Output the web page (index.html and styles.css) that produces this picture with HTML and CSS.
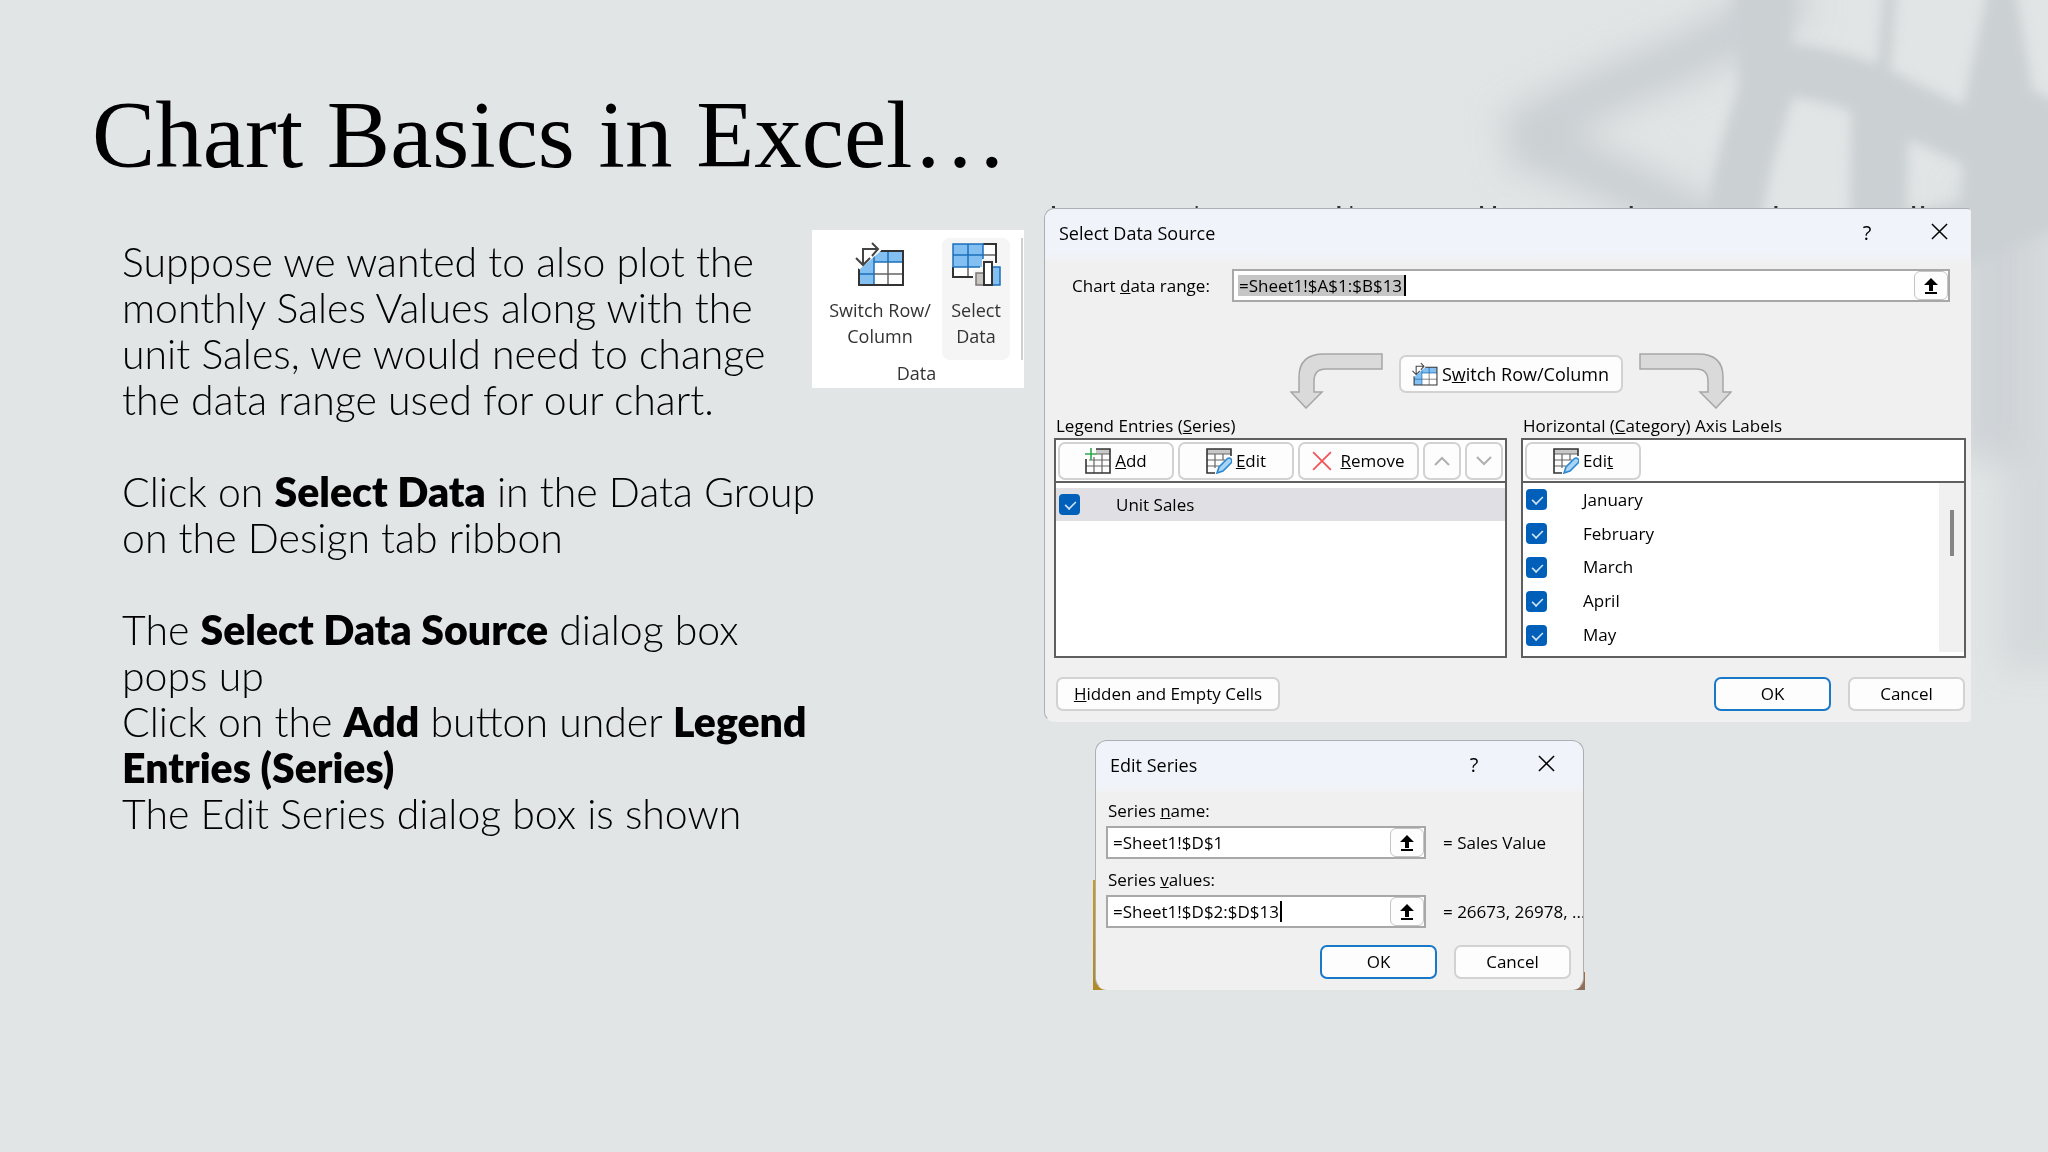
FILE: index.html
```
<!DOCTYPE html>
<html lang="en">
<head>
    <meta charset="UTF-8">
    <meta name="viewport" content="width=device-width, initial-scale=1.0">
    <title>Chart Basics in Excel</title>
    <link rel="stylesheet" href="styles.css">
</head>
<body>
    <!-- shared icons -->
    <svg class="sprite" aria-hidden="true">
        <symbol id="icon-switch" viewBox="0 0 50 46">
            <path d="M4 27L22 10h26v34H4z" fill="#fff"/>
            <path d="M22 10h26v11H19v23H4V27z" fill="#83bff0"/>
            <path d="M4 33h15M19 14v30M19 21h29M33 10v11" fill="none" stroke="#1b6fba" stroke-width="1.5"/>
            <path d="M33 21v23M19 33h29" fill="none" stroke="#666" stroke-width="1.5"/>
            <path d="M22 10h26v34H4V27" fill="none" stroke="#333" stroke-width="2"/>
            <path d="M3 27L25 8" stroke="#fff" stroke-width="4"/>
            <path d="M8 23V8h15M17 2l6 6-6 7M1 17l7 7 7-7" fill="none" stroke="#444" stroke-width="2"/>
        </symbol>
        <symbol id="icon-select" viewBox="0 0 50 46">
            <path d="M2 3h44v33H2z" fill="#fff"/>
            <path d="M2 3h30v23H2z" fill="#83bff0"/>
            <path d="M32 14h13M17 26v10" fill="none" stroke="#666" stroke-width="1.5"/>
            <path d="M32 3h13v19M2 26v10h21" fill="none" stroke="#333" stroke-width="2"/>
            <path d="M2 26V3h30v16M2 14h30M17 3v23M2 26h27" fill="none" stroke="#1b6fba" stroke-width="1.5"/>
            <path d="M22 29h9V18h12v5h8v23H22z" fill="#f5f5f5"/>
            <path d="M25 32h8v12h-8z" fill="#c8c4c0" stroke="#777" stroke-width="1.5"/>
            <path d="M41 26h8v18h-8z" fill="#83bff0" stroke="#1b6fba" stroke-width="1.5"/>
            <path d="M33 21h8v23h-8z" fill="#fff" stroke="#333" stroke-width="2"/>
        </symbol>
        <symbol id="icon-add" viewBox="0 0 26 26">
            <path d="M11 1h14v5H11z" fill="#c8c8c8"/>
            <path d="M9 9v16M17 6v19M4 12h21M1 18h24M12 6h13" fill="none" stroke="#666" stroke-width="1.2"/>
            <path d="M11 1h14v24H1V11" fill="none" stroke="#333" stroke-width="1.6"/>
            <path d="M6 0v12M0 6h12" fill="none" stroke="#2fa84f" stroke-width="1.6"/>
        </symbol>
        <symbol id="icon-edit" viewBox="0 0 26 26">
            <path d="M1 1h24v5H1z" fill="#c8c8c8"/>
            <path d="M9 6v14M17 6v6M1 12h18M1 18h12M1 6h24" fill="none" stroke="#666" stroke-width="1.2"/>
            <path d="M9 25H1V1h24v7" fill="none" stroke="#333" stroke-width="1.6"/>
            <path d="M11 25l2-6 8-8q2-2 4 0t0 4l-8 8z" fill="#a8d4f5" stroke="#2b88d0" stroke-width="1.6"/>
        </symbol>
        <symbol id="icon-close" viewBox="0 0 18 18">
            <path d="M1 1l16 16M17 1L1 17" fill="none" stroke="currentColor" stroke-width="1.6"/>
        </symbol>
        <symbol id="icon-pick" viewBox="0 0 14 16">
            <path d="M7 0l7 7H9v6H5V7H0zM1 14h12v2H1z" fill="currentColor"/>
        </symbol>
        <symbol id="icon-arrow" viewBox="0 0 93 56">
            <path d="M92 1v15H36q-12 0-12 12v11h8L16 55 1 39h8V24Q9 1 34 1z" fill="#dadada" stroke="#a6a6a6" stroke-width="1.5"/>
        </symbol>
    </svg>

    <!-- soft window shadow in the corner -->
    <svg class="shadow" viewBox="0 0 648 800" aria-hidden="true">
        <defs>
            <filter id="soft" x="-20%" y="-20%" width="140%" height="140%"><feGaussianBlur stdDeviation="16"/></filter>
            <filter id="mid" x="-20%" y="-20%" width="140%" height="140%"><feGaussianBlur stdDeviation="6"/></filter>
        </defs>
        <g fill="none" stroke="#cbd0d3" filter="url(#soft)">
            <path d="M400-10Q330 40 250 72T110 140" stroke-width="52"/>
            <path d="M110 140Q200 165 330 240" stroke-width="52"/>
            <path d="M590 190V460" stroke-width="60" opacity=".8"/>
            <path d="M635 190V670" stroke-width="70" opacity=".6"/>
        </g>
        <g fill="none" stroke="#cbd0d3" filter="url(#mid)">
            <path d="M362-10L366 90 345 160 325 260" stroke-width="56"/>
            <path d="M340 70Q420 65 480 95T575 140" stroke-width="54"/>
            <path d="M490-10L483 80" stroke-width="14"/>
            <path d="M480 90L478 260" stroke-width="58"/>
            <path d="M340 245Q480 250 660 200" stroke-width="44"/>
            <path d="M590-20h24l18 110 40 20v110L560 270l5-170z" fill="#cbd0d3"/>
        </g>
    </svg>

    <main class="slide">
        <h1>Chart Basics in Excel…</h1>

        <div class="content">
            <section class="notes">
                <p>Suppose we wanted to also plot the<br>monthly Sales Values along with the<br>unit Sales, we would need to change<br>the data range used for our chart.</p>
                <p>Click on <b>Select Data</b> in the Data Group<br>on the Design tab ribbon</p>
                <p>The <b>Select Data Source</b> dialog box<br>pops up<br>Click on the <b>Add</b> button under <b>Legend<br>Entries (Series)</b><br>The Edit Series dialog box is shown</p>
            </section>

            <section class="ribbon">
                <div class="ribbon-buttons">
                    <button class="ribbon-btn"><svg><use href="#icon-switch"/></svg>Switch Row/<br>Column</button>
                    <button class="ribbon-btn active"><svg><use href="#icon-select"/></svg>Select<br>Data</button>
                </div>
                <div class="ribbon-title">Data</div>
            </section>

            <div class="dialogs">
                <section class="dialog source">
                    <svg class="specks" viewBox="0 0 927 3" preserveAspectRatio="none" aria-hidden="true">
                        <path d="M7 1h3M151 1h2M293 1h3M306 1h2M436 1h3M449 1h3M586 1h3M731 1h3M869 1h3M878 1h3" stroke="#333" stroke-width="2"/>
                    </svg>
                    <header class="title-bar">
                        <h2>Select Data Source</h2>
                        <button class="bar-btn">?</button>
                        <button class="bar-btn" aria-label="Close"><svg><use href="#icon-close"/></svg></button>
                    </header>

                    <div class="range-row">
                        <label for="range">Chart <u>d</u>ata range:</label>
                        <div class="ref-box">
                            <input id="range" class="selected" type="text" value="=Sheet1!$A$1:$B$13">
                            <button class="pick" aria-label="Pick range"><svg><use href="#icon-pick"/></svg></button>
                        </div>
                    </div>

                    <div class="switch-row">
                        <svg class="arrow"><use href="#icon-arrow"/></svg>
                        <button class="btn switch"><svg><use href="#icon-switch"/></svg><span>S<u>w</u>itch Row/Column</span></button>
                        <svg class="arrow flip"><use href="#icon-arrow"/></svg>
                    </div>

                    <div class="lists">
                        <div>
                            <h3>Legend Entries (<u>S</u>eries)</h3>
                            <div class="list">
                                <div class="toolbar">
                                    <button class="btn tool"><svg><use href="#icon-add"/></svg><span><u>A</u>dd</span></button>
                                    <button class="btn tool"><svg><use href="#icon-edit"/></svg><span><u>E</u>dit</span></button>
                                    <button class="btn tool remove"><svg><use href="#icon-close"/></svg><span><u>R</u>emove</span></button>
                                    <button class="btn move" aria-label="Move up"><svg viewBox="0 0 16 10"><path d="M1 9l7-7 7 7"/></svg></button>
                                    <button class="btn move" aria-label="Move down"><svg viewBox="0 0 16 10"><path d="M1 1l7 7 7-7"/></svg></button>
                                </div>
                                <div class="series">
                                    <label class="item current"><input type="checkbox" checked>Unit Sales</label>
                                </div>
                            </div>
                        </div>
                        <div>
                            <h3>Horizontal (<u>C</u>ategory) Axis Labels</h3>
                            <div class="list">
                                <div class="toolbar">
                                    <button class="btn tool"><svg><use href="#icon-edit"/></svg><span>Edi<u>t</u></span></button>
                                </div>
                                <div class="months">
                                    <div class="month-items">
                                        <label class="item"><input type="checkbox" checked>January</label>
                                        <label class="item"><input type="checkbox" checked>February</label>
                                        <label class="item"><input type="checkbox" checked>March</label>
                                        <label class="item"><input type="checkbox" checked>April</label>
                                        <label class="item"><input type="checkbox" checked>May</label>
                                    </div>
                                    <div class="scrollbar"><div class="thumb"></div></div>
                                </div>
                            </div>
                        </div>
                    </div>

                    <footer class="actions">
                        <button class="btn hidden-cells"><span><u>H</u>idden and Empty Cells</span></button>
                        <button class="btn ok">OK</button>
                        <button class="btn cancel">Cancel</button>
                    </footer>
                </section>

                <div class="edit-frame">
                    <section class="dialog edit">
                        <header class="title-bar">
                            <h2>Edit Series</h2>
                            <button class="bar-btn">?</button>
                            <button class="bar-btn" aria-label="Close"><svg><use href="#icon-close"/></svg></button>
                        </header>
                        <div class="fields">
                            <label for="series-name">Series <u>n</u>ame:</label>
                            <div class="field">
                                <div class="ref-box">
                                    <input id="series-name" type="text" value="=Sheet1!$D$1">
                                    <button class="pick" aria-label="Pick name"><svg><use href="#icon-pick"/></svg></button>
                                </div>
                                <span>= Sales Value</span>
                            </div>
                            <label for="series-values">Series <u>v</u>alues:</label>
                            <div class="field">
                                <div class="ref-box">
                                    <input id="series-values" class="caret" type="text" value="=Sheet1!$D$2:$D$13">
                                    <button class="pick" aria-label="Pick values"><svg><use href="#icon-pick"/></svg></button>
                                </div>
                                <span>= 26673, 26978, ...</span>
                            </div>
                        </div>
                        <footer class="actions">
                            <button class="btn ok">OK</button>
                            <button class="btn cancel">Cancel</button>
                        </footer>
                    </section>
                </div>
            </div>
        </div>
    </main>
</body>
</html>
```
FILE: styles.css
```
* {
    box-sizing: border-box;
}

body {
    margin: 0;
    min-height: 100vh;
    background-color: #e1e5e6;
    color: #000;
    font-family: 'Open Sans', 'Noto Sans', sans-serif;
    font-size: 17px;
    line-height: 24px;
    overflow-x: hidden;
}

.sprite {
    display: none;
}

.shadow {
    position: absolute;
    top: 0;
    right: 0;
    width: 648px;
    height: 800px;
}

.slide {
    position: relative;
    padding: 80px 77px 40px 122px;
}

h1 {
    margin: 0 0 18px -30px;
    font-family: 'Liberation Serif', serif;
    font-size: 95px;
    font-weight: normal;
    line-height: 110px;
}

h2, h3 {
    margin: 0;
    font-weight: normal;
}

h3 {
    padding-left: 2px;
    font-size: 17px;
}

.content {
    display: grid;
    grid-template-columns: minmax(0, 690fr) 212px minmax(0, 947fr);
    align-items: start;
}

.notes {
    padding-top: 31px;
    font-family: Lato, sans-serif;
    font-size: 41px;
    font-weight: 300;
    line-height: 46px;
    white-space: nowrap;
}

.notes p {
    margin: 0 0 46px;
}

.notes b {
    font-weight: 800;
}

.ribbon {
    margin-top: 22px;
    padding: 8px 1px 0 10px;
    height: 158px;
    background-color: #fff;
    color: #333;
    font-size: 18px;
    line-height: 26px;
}

.ribbon-buttons {
    display: flex;
    gap: 4px;
    padding-right: 11px;
    border-right: 2px solid #d0d0d0;
}

.ribbon-btn {
    display: flex;
    flex: 1;
    flex-direction: column;
    align-items: center;
    height: 122px;
    padding: 3px 0;
    border: none;
    border-radius: 8px;
    background: none;
    color: inherit;
    font: inherit;
    white-space: nowrap;
}

.ribbon-btn.active {
    flex: 0 0 68px;
    background-color: #f5f5f5;
}

.ribbon-btn svg {
    flex: none;
    width: 50px;
    height: 46px;
    margin-bottom: 10px;
}

.ribbon-title {
    padding-right: 12px;
    text-align: center;
}

.dialogs {
    margin-left: 20px;
}

.dialog {
    position: relative;
    border: 1px solid #adb0b2;
    border-radius: 10px 4px 4px 10px;
    background: linear-gradient(#f0f3f9 44px, #f0f0f0 54px);
}

.source {
    border-right-color: #f0f0f0;
    border-bottom-color: #f0f0f0;
    height: 514px;
}

.specks {
    position: absolute;
    top: -3px;
    left: 0;
    width: 100%;
    height: 3px;
}

.title-bar {
    display: flex;
    align-items: center;
    height: 48px;
    padding: 0 7px 0 14px;
}

.title-bar h2 {
    flex: 1;
    font-size: 18px;
}

.bar-btn {
    width: 48px;
    padding: 0;
    border: none;
    background: none;
    font: inherit;
    font-size: 20px;
}

.bar-btn + .bar-btn {
    margin-left: 24px;
}

.bar-btn svg {
    width: 17px;
    height: 17px;
}

.range-row {
    display: flex;
    align-items: center;
    margin-top: 12px;
    padding: 0 20px 0 27px;
}

.range-row label {
    width: 160px;
}

.ref-box {
    display: flex;
    flex: 1;
    height: 33px;
    border: 2px solid #a8a8a8;
    background-color: #fff;
}

.ref-box input {
    flex: 1;
    min-width: 0;
    padding: 0 5px;
    border: none;
    background-color: #fff;
    font: inherit;
}

.ref-box .selected {
    background: linear-gradient(to right, #c6c6c6 166px, #000 166px) 4px 4px / 168px 21px no-repeat;
}

.ref-box .caret {
    background: linear-gradient(#000, #000) 172px 4px / 2px 21px no-repeat;
}

.pick {
    width: 34px;
    padding: 0;
    border: 1px solid #c4c4c4;
    border-radius: 6px;
    background-color: #fdfdfd;
    color: #000;
}

.pick svg {
    display: block;
    width: 14px;
    height: 16px;
    margin: 0 auto;
}

.switch-row {
    display: flex;
    justify-content: center;
    align-items: flex-start;
    gap: 16px;
    margin-top: 51px;
    padding-left: 6px;
}

.arrow {
    width: 93px;
    height: 56px;
}

.flip {
    transform: scaleX(-1);
}

.btn {
    display: flex;
    justify-content: center;
    align-items: center;
    gap: 4px;
    height: 34px;
    padding: 0;
    border: 2px solid #d2d2d2;
    border-radius: 7px;
    background-color: #fdfdfd;
    color: #000;
    font: inherit;
    white-space: nowrap;
}

.switch {
    width: 224px;
    height: 38px;
    margin-top: 2px;
    font-size: 18px;
}

.btn svg {
    width: 26px;
    height: 26px;
}

.lists {
    display: grid;
    grid-template-columns: 451fr 448fr;
    gap: 14px;
    margin-top: 5px;
    padding: 0 4px 0 9px;
}

.list {
    height: 220px;
    border: 2px solid #5f5f5f;
    background-color: #fff;
}

.toolbar {
    display: flex;
    gap: 4px;
    height: 43px;
    padding: 2px;
    border-bottom: 2px solid #5f5f5f;
}

.toolbar .btn {
    height: 38px;
}

.tool {
    width: 116px;
}

.tool.remove {
    width: 121px;
    gap: 8px;
}

.tool.remove svg {
    width: 20px;
    height: 20px;
    color: #f0545a;
}

.move {
    width: 38px;
}

.move svg {
    width: 16px;
    height: 10px;
    fill: none;
    stroke: #b0b0b0;
    stroke-width: 2;
}

.series {
    padding-top: 5px;
}

.item {
    display: flex;
    flex: 1;
    align-items: center;
    padding-left: 3px;
}

.item.current {
    height: 33px;
    background-color: #e0e0e4;
}

.item input {
    position: relative;
    width: 21px;
    height: 21px;
    margin: 0 36px 0 0;
    border-radius: 4px;
    background-color: #005fb8;
    appearance: none;
}

.item input:checked::after {
    content: '';
    position: absolute;
    top: 6px;
    left: 5px;
    width: 11px;
    height: 6px;
    border: solid #cfe3f5;
    border-width: 0 0 2px 2px;
    transform: rotate(-45deg) scale(0.8);
}

.months {
    display: flex;
    height: 169px;
}

.month-items {
    display: flex;
    flex: 1;
    flex-direction: column;
}

.scrollbar {
    width: 25px;
    padding: 27px 0 0 11px;
    background-color: #f0f0f0;
}

.thumb {
    width: 4px;
    height: 46px;
    background-color: #858585;
}

.actions {
    display: flex;
    gap: 17px;
    margin-top: 19px;
    padding: 0 5px 0 11px;
}

.hidden-cells {
    width: 224px;
    margin-right: auto;
}

.ok, .cancel {
    width: 117px;
}

.ok {
    border-color: #1a78c8;
}

/* sliver of the sheet that shows behind the small dialog */
.edit-frame {
    width: 492px;
    margin: 18px 0 0 49px;
    padding: 0 1px 0 2px;
    background:
        linear-gradient(#c99a1c, #b08a28) left bottom / 14px 110px no-repeat,
        linear-gradient(#b06a30, #8a7060) right bottom / 14px 18px no-repeat;
}

.edit {
    height: 250px;
    overflow: hidden;
    border-radius: 12px;
    border-bottom-color: #f0f0f0;
}

.edit .bar-btn:last-child {
    margin-right: 6px;
}

.fields {
    padding: 10px 0 0 10px;
}

.fields label {
    display: block;
    padding-left: 2px;
}

.field {
    display: flex;
    align-items: center;
    gap: 17px;
    margin: 3px 0 9px;
}

.field .ref-box {
    flex: 0 0 320px;
}

.field span {
    white-space: nowrap;
}

.edit .actions {
    justify-content: flex-end;
    margin-top: 17px;
    padding-right: 12px;
}
```
